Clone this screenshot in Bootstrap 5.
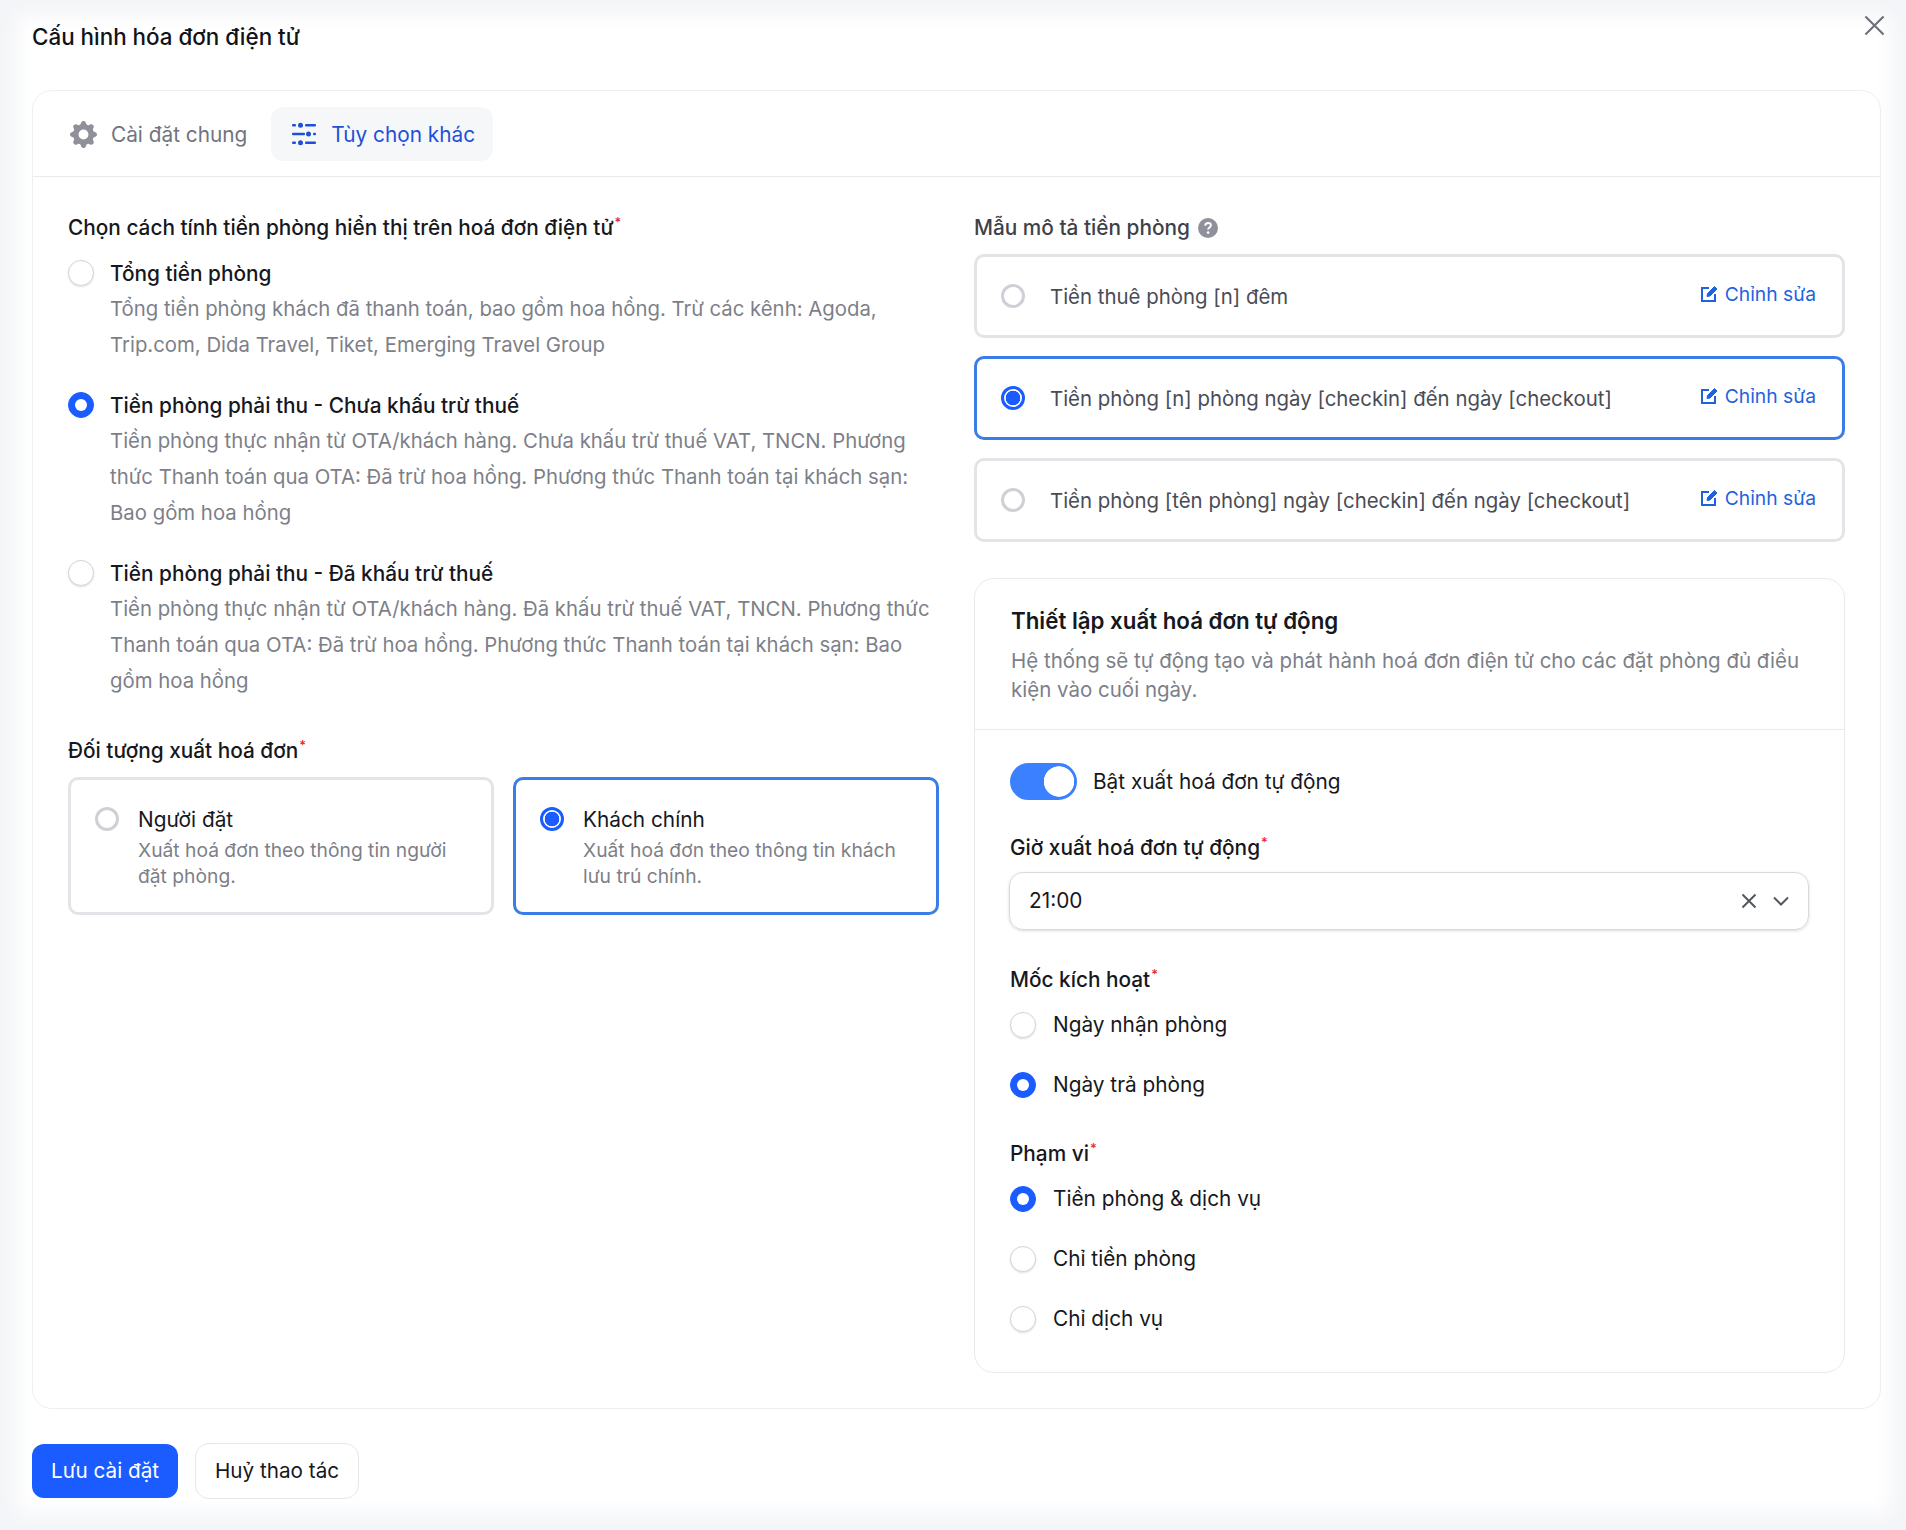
<!DOCTYPE html>
<html lang="vi">
<head>
  <meta charset="UTF-8" />
  <meta name="viewport" content="width=device-width, initial-scale=1.0" />
  <title>Cấu hình hóa đơn điện tử</title>
  <link href="https://cdn.jsdelivr.net/npm/bootstrap@5.3.0/dist/css/bootstrap.min.css" rel="stylesheet" />
  <script src="https://cdn.jsdelivr.net/npm/bootstrap@5.3.0/dist/js/bootstrap.bundle.min.js"></script>

  <style>
    body {
      background: #fff;
      font-family: Inter, "Noto Sans", sans-serif;
      font-size: 20.8px;
      color: #16181d;
      height: 1530px;
      overflow: hidden;
    }

    /* Modal shell, the soft grey edge around it is an inset shadow */
    .modal-shell {
      position: relative;
      height: 100%;
      padding: 19px 25px 0 32px;
      background: #fff;
      box-shadow: inset 1px 0 20px 16px #f4f5f8;
    }
    .modal-heading { font-size: 22.4px; line-height: 36px; font-weight: 500; margin: 0 0 35px; color: #111318; }
    .close-x { position: absolute; top: 15px; right: 21px; color: #6d6f7a; }

    .settings-panel { border: 1.5px solid #eeeff2; border-radius: 20px; height: 1319px; }
    .tab-strip { height: 86px; padding: 16px 19px 0; border-bottom: 1.5px solid #e9eaee; gap: 6px; }
    .tab-item { height: 54px; padding: 0 18px; border-radius: 12px; color: #71737e; gap: 14px; }
    .tab-item span { margin-top: 2px; }
    .tab-item.is-active { background: #f6f7f9; color: #1f50d8; padding-left: 20px; }
    .panel-body { padding: 34px 35px 0; }
    .panel-body > .row { --bs-gutter-x: 35px; }

    .field-label { line-height: 34px; font-weight: 450; color: #16181d; margin: 0; }
    .req { color: #e5252a; font-size: 13px; vertical-align: 8px; line-height: 0; margin-left: 1px; }
    .muted-label { color: #3f4149; }
    .label-price { margin-bottom: 11px; }
    .label-audience { margin: 35px 0 9px; }
    .label-template { margin-bottom: 9px; }
    .label-time { margin: 31px 0 7px; }
    .label-trigger { margin: 33px 0 -2px; }
    .label-scope { margin: 22px 0 -2px; }

    /* Radios */
    .form-check-input.plain-radio {
      width: 26px; height: 26px; margin: 0; flex: none;
      border: 1px solid #d4d5da;
      box-shadow: 0 1px 2px rgba(0,0,0,.12);
    }
    .form-check-input.plain-radio:checked { background-color: #1a5cff; border-color: #1a5cff; box-shadow: none; }
    .form-check-input.plain-radio:focus { box-shadow: none; }

    .ring-radio {
      appearance: none; width: 24px; height: 24px; flex: none; margin: 0;
      border: 3px solid #cfd0d5; border-radius: 50%; background: #fff;
    }
    .ring-radio:checked {
      border-color: #1a5cff;
      background: radial-gradient(circle, #1a5cff 0 7px, #fff 7.6px);
    }

    .price-opt { gap: 16px; }
    .price-opt + .price-opt { margin-top: 25px; }
    .opt-title { line-height: 35px; color: #16181d; font-weight: 450; }
    .opt-desc { font-size: 20.35px; line-height: 36px; color: #7d7f88; }

    .audience-row { --bs-gutter-x: 19px; }
    .pick-box { border: 3px solid #e3e4e7; border-radius: 10px; background: #fff; }
    .pick-box.is-on { border-color: #3a7de6; }
    .audience-box { width: 100%; height: 138px; padding: 27px 20px 0 24px; gap: 19px; }
    .audience-box .box-title { line-height: 30px; margin-top: -2px; }
    .audience-box .box-desc { font-size: 19.25px; line-height: 26px; color: #7d7f88; margin-top: 2px; }
    .template-box { height: 84px; padding: 0 26px 0 24px; margin-bottom: 18px; gap: 25px; }
    .template-box:last-child { margin-bottom: 0; }
    .template-box .tpl-text { font-size: 20.4px; color: #4a4c55; margin-top: 2px; }
    .edit-link { color: #1f62e0; font-size: 19.3px; text-decoration: none; margin-top: -4px; gap: 7px; white-space: nowrap; }

    .auto-panel { border: 1.5px solid #e9eaee; border-radius: 20px; margin-top: 36px; height: 795px; }
    .auto-head { height: 151px; padding: 22px 36px 0; border-bottom: 1.5px solid #e9eaee; }
    .auto-title { font-size: 22.3px; font-weight: 600; line-height: 40px; margin: 0; }
    .auto-desc { font-size: 20.5px; line-height: 29px; color: #7d7f88; margin: 5px 0 0; }
    .auto-body { padding: 33px 35px 0; }

    .form-switch .form-check-input.auto-toggle,
    .form-switch .form-check-input.auto-toggle:checked {
      width: 67px; height: 37px; margin: 0; flex: none; border-radius: 19px;
      background-color: #3b80ff; border: 2px solid #3b80ff;
      background-image: radial-gradient(circle 15.5px at calc(100% - 16px) 50%, #fff 96%, transparent 100%);
      background-position: 0 0; background-size: auto;
    }
    .select-shell {
      height: 58px; width: 800px; margin-left: -1px; padding: 0 19px 0 19px; border-radius: 14px;
      border: 1px solid #d8d9dd; box-shadow: 0 1px 3px rgba(0,0,0,.15);
    }
    .radio-line { gap: 17px; height: 60px; }

    .action-row { margin-top: 35px; gap: 17px; }
    .btn.save-btn { background: #1a5cff; border: 0; color: #fff; height: 54px; width: 146px; font-size: 20.7px; border-radius: 12px; padding: 0; }
    .btn.cancel-btn { background: #fff; border: 1.5px solid #e6e7ea; color: #16181d; height: 56px; width: 164px; font-size: 20.7px; border-radius: 14px; padding: 0; margin-top: -1px; }
  </style>
</head>
<body>

  <div class="modal-shell">
    <h5 class="modal-heading">Cấu hình hóa đơn điện tử</h5>
    <svg class="close-x" width="21" height="21" viewBox="0 0 22 22" fill="none" stroke="currentColor" stroke-width="2.2"><path d="M1.5 1.5 20.5 20.5M20.5 1.5 1.5 20.5"/></svg>

    <div class="settings-panel">
      <!-- Tabs -->
      <div class="tab-strip d-flex">
        <div class="tab-item d-flex align-items-center">
          <svg width="27" height="27" viewBox="0 0 16 16" fill="#8f909a"><path d="M9.405 1.05c-.413-1.4-2.397-1.4-2.81 0l-.1.34a1.464 1.464 0 0 1-2.105.872l-.31-.17c-1.283-.698-2.686.705-1.987 1.987l.169.311c.446.82.023 1.841-.872 2.105l-.34.1c-1.4.413-1.4 2.397 0 2.81l.34.1a1.464 1.464 0 0 1 .872 2.105l-.17.31c-.698 1.283.705 2.686 1.987 1.987l.311-.169a1.464 1.464 0 0 1 2.105.872l.1.34c.413 1.4 2.397 1.4 2.81 0l.1-.34a1.464 1.464 0 0 1 2.105-.872l.31.17c1.283.698 2.686-.705 1.987-1.987l-.169-.311a1.464 1.464 0 0 1 .872-2.105l.34-.1c1.4-.413 1.4-2.397 0-2.81l-.34-.1a1.464 1.464 0 0 1-.872-2.105l.17-.31c.698-1.283-.705-2.686-1.987-1.987l-.311.169a1.464 1.464 0 0 1-2.105-.872l-.1-.34zM8 10.93a2.929 2.929 0 1 1 0-5.86 2.929 2.929 0 0 1 0 5.858z"/></svg>
          <span>Cài đặt chung</span>
        </div>
        <div class="tab-item is-active d-flex align-items-center">
          <svg width="26" height="26" viewBox="0 0 26 26" fill="#1f50d8"><rect x="1" y="3" width="4" height="2.4" rx="1"/><circle cx="9.500" cy="4.200" r="2.500"/><rect x="14" y="3" width="11" height="2.4" rx="1"/><rect x="1" y="11.800" width="13" height="2.4" rx="1"/><circle cx="17.500" cy="13" r="2.500"/><rect x="22" y="11.800" width="3" height="2.4" rx="1"/><rect x="1" y="20.600" width="4" height="2.4" rx="1"/><circle cx="9.500" cy="21.800" r="2.500"/><rect x="14" y="20.600" width="11" height="2.4" rx="1"/></svg>
          <span>Tùy chọn khác</span>
        </div>
      </div>

      <div class="panel-body">
        <div class="row">
          <!-- Left column -->
          <div class="col-6">
            <p class="field-label label-price">Chọn cách tính tiền phòng hiển thị trên hoá đơn điện tử<span class="req">*</span></p>

            <div class="price-opt d-flex">
              <input class="form-check-input plain-radio mt-1" type="radio" name="priceMode" />
              <div>
                <div class="opt-title">Tổng tiền phòng</div>
                <div class="opt-desc">Tổng tiền phòng khách đã thanh toán, bao gồm hoa hồng. Trừ các kênh: Agoda, Trip.com, Dida Travel, Tiket, Emerging Travel Group</div>
              </div>
            </div>
            <div class="price-opt d-flex">
              <input class="form-check-input plain-radio mt-1" type="radio" name="priceMode" checked />
              <div>
                <div class="opt-title">Tiền phòng phải thu - Chưa khấu trừ thuế</div>
                <div class="opt-desc">Tiền phòng thực nhận từ OTA/khách hàng. Chưa khấu trừ thuế VAT, TNCN. Phương thức Thanh toán qua OTA: Đã trừ hoa hồng. Phương thức Thanh toán tại khách sạn: Bao gồm hoa hồng</div>
              </div>
            </div>
            <div class="price-opt d-flex">
              <input class="form-check-input plain-radio mt-1" type="radio" name="priceMode" />
              <div>
                <div class="opt-title">Tiền phòng phải thu - Đã khấu trừ thuế</div>
                <div class="opt-desc">Tiền phòng thực nhận từ OTA/khách hàng. Đã khấu trừ thuế VAT, TNCN. Phương thức Thanh toán qua OTA: Đã trừ hoa hồng. Phương thức Thanh toán tại khách sạn: Bao gồm hoa hồng</div>
              </div>
            </div>

            <p class="field-label label-audience">Đối tượng xuất hoá đơn<span class="req">*</span></p>
            <div class="row audience-row">
              <div class="col-6">
                <label class="pick-box audience-box d-flex">
                  <input class="ring-radio" type="radio" name="audience" />
                  <span>
                    <span class="box-title d-block">Người đặt</span>
                    <span class="box-desc d-block">Xuất hoá đơn theo thông tin người đặt phòng.</span>
                  </span>
                </label>
              </div>
              <div class="col-6">
                <label class="pick-box is-on audience-box d-flex">
                  <input class="ring-radio" type="radio" name="audience" checked />
                  <span>
                    <span class="box-title d-block">Khách chính</span>
                    <span class="box-desc d-block">Xuất hoá đơn theo thông tin khách lưu trú chính.</span>
                  </span>
                </label>
              </div>
            </div>
          </div>

          <!-- Right column -->
          <div class="col-6">
            <p class="field-label muted-label label-template d-flex align-items-center gap-2">Mẫu mô tả tiền phòng
              <svg width="20" height="20" viewBox="0 0 20 20"><circle cx="10" cy="10" r="10" fill="#8f909a"/><path d="M7.2 7.6c.1-1.7 1.3-2.7 2.9-2.7 1.6 0 2.8 1 2.8 2.4 0 2.1-2.8 2.2-2.8 4.2" fill="none" stroke="#fff" stroke-width="2"/><circle cx="10.100" cy="14.600" r="1.300" fill="#fff"/></svg>
            </p>

            <div>
              <div class="pick-box template-box d-flex align-items-center">
                <input class="ring-radio" type="radio" name="template" />
                <span class="tpl-text flex-grow-1">Tiền thuê phòng [n] đêm</span>
                <a class="edit-link d-flex align-items-center" href="#">
                  <svg width="18" height="18" viewBox="0 0 18 18" fill="none" stroke="currentColor" stroke-width="2"><path d="M9 3H2v13h13V9"/><path d="M7 11.500 7.500 8.500 14.500 1.500 17 4 10 11z" fill="currentColor" stroke-width="1"/></svg>
                  Chỉnh sửa</a>
              </div>
              <div class="pick-box is-on template-box d-flex align-items-center">
                <input class="ring-radio" type="radio" name="template" checked />
                <span class="tpl-text flex-grow-1">Tiền phòng [n] phòng ngày [checkin] đến ngày [checkout]</span>
                <a class="edit-link d-flex align-items-center" href="#">
                  <svg width="18" height="18" viewBox="0 0 18 18" fill="none" stroke="currentColor" stroke-width="2"><path d="M9 3H2v13h13V9"/><path d="M7 11.500 7.500 8.500 14.500 1.500 17 4 10 11z" fill="currentColor" stroke-width="1"/></svg>
                  Chỉnh sửa</a>
              </div>
              <div class="pick-box template-box d-flex align-items-center">
                <input class="ring-radio" type="radio" name="template" />
                <span class="tpl-text flex-grow-1">Tiền phòng [tên phòng] ngày [checkin] đến ngày [checkout]</span>
                <a class="edit-link d-flex align-items-center" href="#">
                  <svg width="18" height="18" viewBox="0 0 18 18" fill="none" stroke="currentColor" stroke-width="2"><path d="M9 3H2v13h13V9"/><path d="M7 11.500 7.500 8.500 14.500 1.500 17 4 10 11z" fill="currentColor" stroke-width="1"/></svg>
                  Chỉnh sửa</a>
              </div>
            </div>

            <div class="auto-panel">
              <div class="auto-head">
                <h6 class="auto-title">Thiết lập xuất hoá đơn tự động</h6>
                <p class="auto-desc">Hệ thống sẽ tự động tạo và phát hành hoá đơn điện tử cho các đặt phòng đủ điều kiện vào cuối ngày.</p>
              </div>
              <div class="auto-body">
                <div class="form-check form-switch d-flex align-items-center gap-3 p-0 m-0">
                  <input class="form-check-input auto-toggle" type="checkbox" role="switch" checked />
                  <span>Bật xuất hoá đơn tự động</span>
                </div>

                <p class="field-label label-time">Giờ xuất hoá đơn tự động<span class="req">*</span></p>
                <div class="select-shell d-flex align-items-center justify-content-between">
                  <span>21:00</span>
                  <span class="d-flex align-items-center gap-3">
                    <svg width="16" height="16" viewBox="0 0 16 16" fill="none" stroke="#55575f" stroke-width="2"><path d="M1.500 1.500 14.500 14.500M14.500 1.500 1.500 14.500"/></svg>
                    <svg width="16" height="10" viewBox="0 0 16 10" fill="none" stroke="#55575f" stroke-width="2"><path d="M1 1.500 8 8.500 15 1.500"/></svg>
                  </span>
                </div>

                <p class="field-label label-trigger">Mốc kích hoạt<span class="req">*</span></p>
                <div class="radio-line d-flex align-items-center">
                  <input class="form-check-input plain-radio" type="radio" name="trigger" />
                  <span>Ngày nhận phòng</span>
                </div>
                <div class="radio-line d-flex align-items-center">
                  <input class="form-check-input plain-radio" type="radio" name="trigger" checked />
                  <span>Ngày trả phòng</span>
                </div>

                <p class="field-label label-scope">Phạm vi<span class="req">*</span></p>
                <div class="radio-line d-flex align-items-center">
                  <input class="form-check-input plain-radio" type="radio" name="scope" checked />
                  <span>Tiền phòng &amp; dịch vụ</span>
                </div>
                <div class="radio-line d-flex align-items-center">
                  <input class="form-check-input plain-radio" type="radio" name="scope" />
                  <span>Chỉ tiền phòng</span>
                </div>
                <div class="radio-line d-flex align-items-center">
                  <input class="form-check-input plain-radio" type="radio" name="scope" />
                  <span>Chỉ dịch vụ</span>
                </div>
              </div>
            </div>
          </div>
        </div>
      </div>
    </div>

    <div class="action-row d-flex">
      <button class="btn save-btn">Lưu cài đặt</button>
      <button class="btn cancel-btn">Huỷ thao tác</button>
    </div>
  </div>

</body>
</html>
